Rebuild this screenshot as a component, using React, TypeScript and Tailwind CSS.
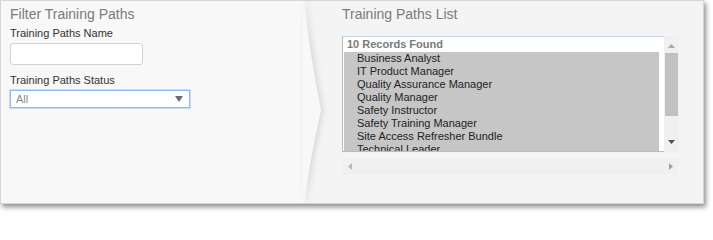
import React from 'react';

const items = [
  'Business Analyst',
  'IT Product Manager',
  'Quality Assurance Manager',
  'Quality Manager',
  'Safety Instructor',
  'Safety Training Manager',
  'Site Access Refresher Bundle',
  'Technical Leader',
];

const FilterPanel: React.FC = () => (
  <div className="relative z-10 w-[302px] shrink-0 bg-[#f8f8f8] pl-[9px] pt-[4px]">
    <h2 className="text-[14px] leading-[18px] text-[#7b7b7b]">Filter Training Paths</h2>
    <label className="mt-[3px] block text-[11px] leading-[14px] text-[#333]">Training Paths Name</label>
    <input
      type="text"
      className="mt-[3px] block h-[22px] w-[133px] rounded-[3px] border border-[#d2d2d2] bg-white outline-none"
    />
    <label className="mt-[8px] block text-[11px] leading-[14px] text-[#333]">Training Paths Status</label>
    <div className="mt-[3px] flex h-[18px] w-[180px] items-center justify-between border border-[#8dbcf0] bg-white pl-[5px] pr-[6px] shadow-[0_0_0_1px_rgba(141,188,240,0.45)]">
      <span className="text-[11px] leading-none text-[#8a8a8a]">All</span>
      <svg width="8" height="6" viewBox="0 0 8 6">
        <polygon points="0,0 8,0 4,6" fill="#6b6b78" />
      </svg>
    </div>

    {/* chevron edge */}
    <svg
      className="absolute left-full top-0 h-full w-[20px] drop-shadow-[2px_0_3px_rgba(0,0,0,0.13)]"
      viewBox="0 0 20 204"
      preserveAspectRatio="none"
    >
      <path d="M0 0 L1 0 Q7 55 18 110 Q7 160 1 204 L0 204 Z" fill="#f8f8f8" />
    </svg>
  </div>
);

const ListPanel: React.FC = () => (
  <div className="flex-1 bg-[#f4f4f4] pl-[39px] pt-[4px]">
    <h2 className="text-[14px] leading-[18px] text-[#7b7b7b]">Training Paths List</h2>

    {/* list box */}
    <div className="mt-[13px] flex h-[116px] w-[337px]">
      <div className="flex-1 overflow-hidden border-l border-t border-b border-[#b9bcc2] border-t-[#c5d3e2] bg-white pl-px pr-[5px]">
        <div className="h-[15px] pl-[3px] text-[11px] font-bold leading-[15px] text-[#7a7a7a]">10 Records Found</div>
        <div className="bg-[#c6c6c6]">
          {items.map((item) => (
            <div key={item} className="h-[13px] pl-[13px] text-[11px] leading-[13px] text-[#222] whitespace-nowrap">
              {item}
            </div>
          ))}
        </div>
      </div>
      {/* vertical scrollbar */}
      <div className="flex w-[15px] flex-col items-center bg-[#f0f0f0]">
        <svg className="mt-[8px]" width="7" height="4" viewBox="0 0 7 4">
          <polygon points="0,4 7,4 3.5,0" fill="#a8a8a8" />
        </svg>
        <div className="mt-[5px] h-[63px] w-[13px] bg-[#c1c1c1]" />
        <svg className="mt-[24px]" width="7" height="4" viewBox="0 0 7 4">
          <polygon points="0,0 7,0 3.5,4" fill="#505050" />
        </svg>
      </div>
    </div>

    {/* horizontal scrollbar */}
    <div className="mt-[6px] flex h-[17px] w-[337px] items-center justify-between bg-[#f0f0f0] px-[6px]">
      <svg width="4" height="7" viewBox="0 0 4 7">
        <polygon points="4,0 4,7 0,3.5" fill="#b8b8b8" />
      </svg>
      <svg width="4" height="7" viewBox="0 0 4 7">
        <polygon points="0,0 0,7 4,3.5" fill="#a0a0a0" />
      </svg>
    </div>
  </div>
);

export default function App() {
  return (
    <div className="h-[215px] w-[713px] bg-white" style={{ fontFamily: '"Liberation Sans", Arial, sans-serif' }}>
      <div className="flex h-[204px] w-[704px] border border-[#d6d6d6] shadow-[2px_3px_5px_rgba(0,0,0,0.45)]">
        <FilterPanel />
        <ListPanel />
      </div>
    </div>
  );
}
